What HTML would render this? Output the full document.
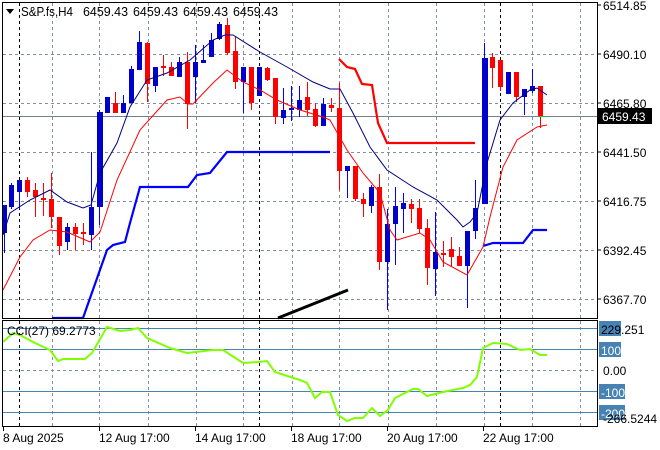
<!DOCTYPE html>
<html><head><meta charset="utf-8"><style>
html,body{margin:0;padding:0;background:#fff;width:660px;height:450px;overflow:hidden}
svg{display:block;font-family:"Liberation Sans",Tahoma,sans-serif}
</style></head><body>
<svg id="s" width="660" height="450" xmlns="http://www.w3.org/2000/svg">
<rect width="660" height="450" fill="#fff"/>
<g id="grid" stroke="#8090a0" stroke-dasharray="3,3" stroke-width="1"></g>
<g id="vb" stroke="#000" stroke-dasharray="3,3" stroke-width="1"></g>
<line x1="3" y1="116.5" x2="597" y2="116.5" stroke="#708090" stroke-width="1"/>
<g stroke="#4682b4" stroke-width="1">
<line x1="3" y1="328.5" x2="597" y2="328.5"/>
<line x1="3" y1="349.5" x2="597" y2="349.5"/>
<line x1="3" y1="391.5" x2="597" y2="391.5"/>
<line x1="3" y1="412.5" x2="597" y2="412.5"/>
</g>
<line x1="3" y1="370.5" x2="597" y2="370.5" stroke="#8090a0" stroke-dasharray="3,3"/>
<polyline fill="none" stroke="#0000ff" stroke-width="2.2" points="52,318 83,318 107,250 113,245 125,242 130,223 140,187 188,187 197,175 210,173 227,152 330,152"/>
<polyline fill="none" stroke="#0000ff" stroke-width="2.2" points="483,246 493,243 523,243 533,230 547,230"/>
<polyline fill="none" stroke="#ff0000" stroke-width="2.2" points="339,59 347,67 355,69 362,84 372,85 378,123 387,143 475,143"/>
<line x1="278" y1="318" x2="348" y2="290" stroke="#000" stroke-width="3"/>
<g id="candles"></g>
<polyline fill="none" stroke="#000080" stroke-width="1" points="3,235 10,213 30,200 50,190 67,202 83,208 91,205 100,173 117,143 130,107 147,80 167,73 190,60 213,40 225,35 233,35 260,52 287,67 313,82 330,89 340,89 353,113 370,147 387,170 413,187 437,200 457,220 463,227 470,222 477,213 487,163 500,120 513,103 530,90 537,88 547,95"/>
<polyline fill="none" stroke="#ff0000" stroke-width="1" points="3,290 20,257 33,240 50,230 67,232 90,242 100,232 103,223 117,180 140,130 167,100 180,97 188,104 193,104 213,83 227,70 243,82 260,90 277,100 300,110 323,117 330,120 347,150 363,173 380,193 390,230 397,240 420,233 430,240 443,262 467,275 483,247 490,217 503,167 517,140 537,127 547,125"/>
<line x1="540" y1="116.5" x2="546" y2="116.5" stroke="#00e000"/>
<polyline fill="none" stroke="#7fff00" stroke-width="2" points="3,342 13,333 20,335 33,342 50,350 58,361 63,359 85,359 92,353 107,327 120,331 130,330 138,328 147,338 170,348 187,353 213,350 223,350 243,363 258,362 267,361 275,372 300,380 307,383 315,398 322,392 330,392 338,415 347,421 355,418 363,418 372,408 380,416 388,410 395,398 413,389 418,389 427,396 443,392 463,388 470,385 477,377 483,348 493,343 507,344 520,350 530,349 540,355 547,355"/>
<rect x="2.5" y="2.5" width="595" height="316" fill="none" stroke="#000"/>
<rect x="2.5" y="320.5" width="595" height="106" fill="none" stroke="#000"/>
<g id="ticks" stroke="#000"></g>
<polygon points="6,9 14,9 10,14" fill="#000"/>
<g font-size="12.5" fill="#000">
<text x="21" y="16" textLength="52" lengthAdjust="spacingAndGlyphs">S&amp;P.fs,H4</text>
<text x="83" y="16" textLength="45" lengthAdjust="spacingAndGlyphs">6459.43</text>
<text x="133" y="16" textLength="45" lengthAdjust="spacingAndGlyphs">6459.43</text>
<text x="183" y="16" textLength="45" lengthAdjust="spacingAndGlyphs">6459.43</text>
<text x="233" y="16" textLength="45" lengthAdjust="spacingAndGlyphs">6459.43</text>
</g>
<text x="7" y="335" font-size="12" fill="#000">CCI(27) 69.2773</text>
<g font-size="12" fill="#000">
<text x="603" y="10">6514.85</text>
<text x="603" y="59">6490.10</text>
<text x="603" y="108">6465.80</text>
<text x="603" y="157">6441.50</text>
<text x="603" y="206">6416.75</text>
<text x="603" y="255">6392.45</text>
<text x="603" y="304">6367.70</text>
</g>
<g stroke="#000"><line x1="597" y1="5" x2="601" y2="5"/><line x1="597" y1="54" x2="601" y2="54"/><line x1="597" y1="103" x2="601" y2="103"/><line x1="597" y1="152" x2="601" y2="152"/><line x1="597" y1="201" x2="601" y2="201"/><line x1="597" y1="250" x2="601" y2="250"/><line x1="597" y1="299" x2="601" y2="299"/></g>
<rect x="598" y="108" width="54" height="16" fill="#000"/>
<text x="602" y="121" font-size="12" fill="#fff">6459.43</text>
<rect x="599" y="321" width="22" height="15" fill="#4682b4"/>
<text x="601" y="334" font-size="12" fill="#000">229.251</text>
<rect x="599" y="342" width="22" height="15" fill="#4682b4"/>
<text x="601" y="355" font-size="12" fill="#fff">100</text>
<text x="603" y="375" font-size="12" fill="#000">0.00</text>
<rect x="599" y="384" width="26" height="15" fill="#4682b4"/>
<text x="601" y="397" font-size="12" fill="#fff">-100</text>
<rect x="599" y="405" width="26" height="15" fill="#4682b4"/>
<text x="601" y="418" font-size="12" fill="#fff">-200</text>
<text x="603" y="423" font-size="12" fill="#000">-266.5244</text>
<g font-size="12" fill="#000">
<text x="3" y="442">8 Aug 2025</text>
<text x="99" y="442">12 Aug 17:00</text>
<text x="195" y="442">14 Aug 17:00</text>
<text x="291" y="442">18 Aug 17:00</text>
<text x="387" y="442">20 Aug 17:00</text>
<text x="483" y="442">22 Aug 17:00</text>
</g>
</svg>
<script>
var NS="http://www.w3.org/2000/svg";
function el(p,t,a){var e=document.createElementNS(NS,t);for(var k in a)e.setAttribute(k,a[k]);p.appendChild(e);return e;}
var g=document.getElementById('grid'),vb=document.getElementById('vb'),tk=document.getElementById('ticks');
[52,99,148,196,243,292,339,388,436,484,532,580].forEach(function(x){el(g,'line',{x1:x+.5,y1:3,x2:x+.5,y2:318});el(g,'line',{x1:x+.5,y1:321,x2:x+.5,y2:426});});
[54,103,152,201,250,299].forEach(function(y){el(g,'line',{x1:3,y1:y+.5,x2:597,y2:y+.5});});
[19,259,500].forEach(function(x){el(vb,'line',{x1:x+.5,y1:3,x2:x+.5,y2:318});el(vb,'line',{x1:x+.5,y1:321,x2:x+.5,y2:426});});
[3,99,195,291,387,483].forEach(function(x){el(tk,'line',{x1:x+.5,y1:426,x2:x+.5,y2:431});});
var c=document.getElementById('candles');
var d=[[4,'b',205,233,205,253],[11,'b',185,207,183,209],[19,'b',180,192,180,209],[27,'r',180,192,177,197],[35,'r',190,197,183,217],[43,'r',198,200,183,216],[51,'r',199,217,173,228],[59,'r',217,246,217,255],[67,'b',227,242,223,250],[75,'r',227,234,223,250],[83,'r',232,234,223,245],[91,'b',207,235,152,250],[99,'b',112,207,110,225],
[107,'b',97,113,97,113],[115,'r',103,113,92,113],[123,'b',103,113,95,113],[131,'b',69,103,66,103],[139,'b',42,70,31,70],[147,'r',43,84,42,102],[155,'b',67,86,67,92],[163,'r',66,68,55,76],[171,'r',67,76,62,76],[179,'b',62,77,57,77],[187,'r',62,104,52,129],[195,'b',62,77,45,103],[203,'b',60,63,45,63],[211,'b',40,57,33,57],[219,'b',24,39,22,40],[227,'r',25,53,18,55],[235,'r',51,82,36,89],[243,'b',67,82,67,113],[251,'r',67,103,67,110],[259,'b',67,96,67,96],[267,'r',68,80,67,81],[275,'r',78,117,78,124],[283,'b',110,118,88,124],[291,'b',108,110,86,121],[299,'b',100,110,86,117],[307,'r',97,110,82,116],[315,'r',109,126,103,127],[323,'b',104,126,98,126],[331,'r',105,108,98,112],
[339,'r',108,171,83,190],[347,'b',166,171,166,198],[355,'r',166,199,166,201],[363,'r',199,204,193,217],[371,'b',187,206,185,213],[379,'r',187,262,174,270],[387,'b',224,262,209,310],[395,'b',206,224,187,265],[403,'b',203,209,193,233],[411,'r',204,209,199,223],[419,'r',208,229,199,233],[427,'r',228,268,219,285],[435,'b',252,269,212,296],[443,'r',253,255,241,267],[451,'r',249,257,237,266],[459,'r',256,266,247,266],[467,'b',231,266,231,308],[475,'b',208,231,180,239],[484,'b',58,204,43,204],
[492,'r',57,68,53,88],[500,'r',60,87,60,91],[508,'b',72,94,72,94],[516,'r',72,97,72,102],[524,'b',89,97,89,115],[532,'b',86,91,69,93],[540,'r',86,116,86,128]];
d.forEach(function(k){var col=k[1]=='b'?'#0000cc':'#ff0000';var wc=k[1]=='b'?'#0000ff':'#ff0000';
el(c,'line',{x1:k[0]+.5,y1:k[4],x2:k[0]+.5,y2:k[5],stroke:wc,'stroke-width':1});
var w=k[0]==99||k[0]==484?6:5;
el(c,'rect',{x:k[0]-2,y:k[2],width:w,height:Math.max(2,k[3]-k[2]),fill:col});});
</script>
</body></html>
